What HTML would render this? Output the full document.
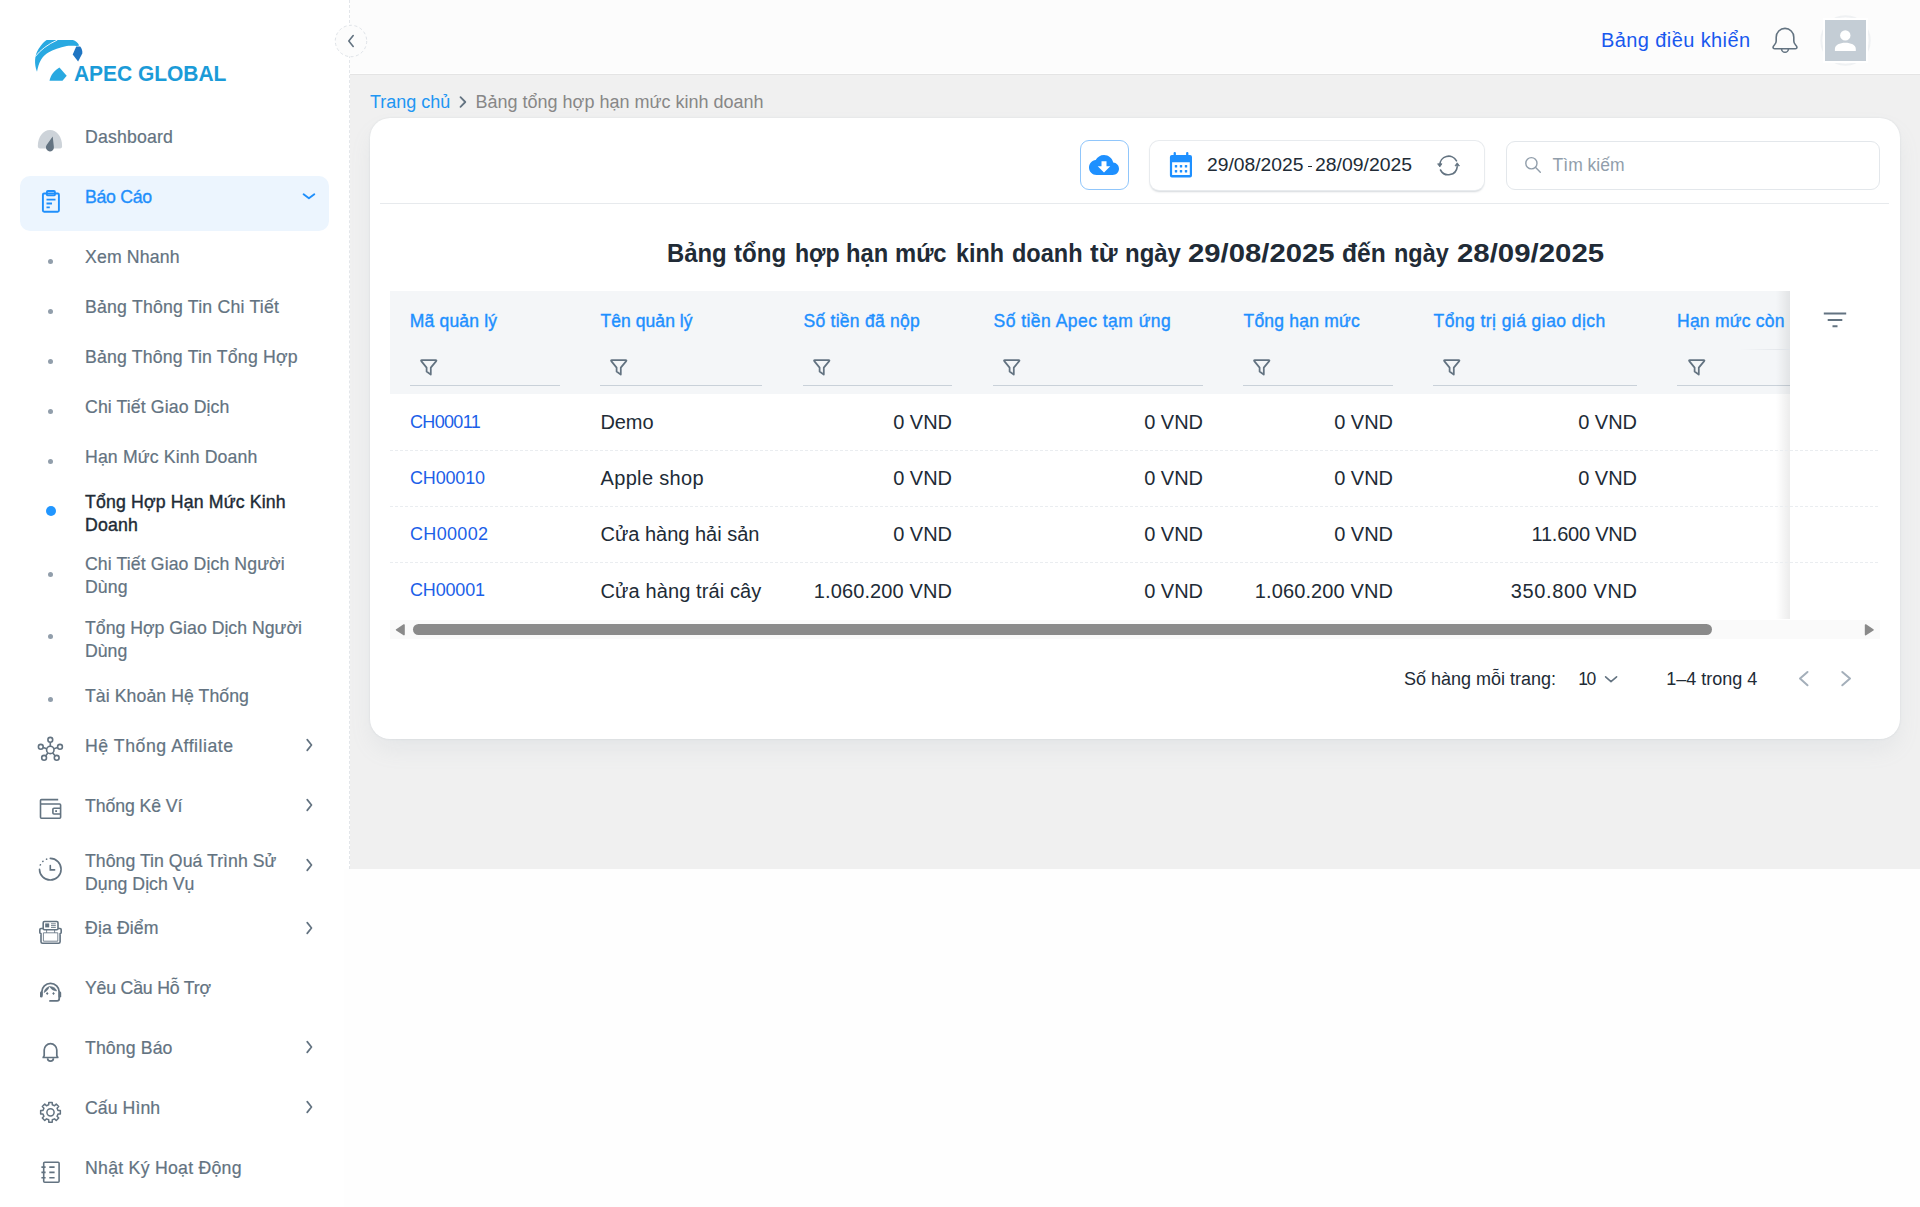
<!DOCTYPE html>
<html><head><meta charset="utf-8"><style>
*{box-sizing:border-box;margin:0;padding:0}
html,body{width:1920px;height:1207px;overflow:hidden;background:#fefefe;font-family:"Liberation Sans",sans-serif;}
.a{position:absolute}
#sidebar{position:absolute;left:0;top:0;width:350px;height:869px;background:#fff;border-right:1px dashed #e3e6ea}
#sidebar-low{position:absolute;left:0;top:869px;width:344px;height:338px;background:#fff}
.nav{position:absolute;left:85px;font-size:17.70px;line-height:23px;color:#637381;-webkit-text-stroke:0.2px #637381;white-space:nowrap}
.bul{position:absolute;left:48px;width:5px;height:5px;border-radius:50%;background:#919eab}
#header{position:absolute;left:350px;top:0;width:1570px;height:75px;background:#fcfcfc;border-bottom:1px solid #e4e4e4;box-shadow:inset 0 -1px 0 #fefefe}
#main{position:absolute;left:350px;top:75px;width:1570px;height:794px;background:#f0f0f0}
#card{position:absolute;left:370px;top:118px;width:1530px;height:621px;background:#fff;border-radius:20px;box-shadow:0 0 2px 0 rgba(145,158,171,0.25),0 12px 24px -4px rgba(145,158,171,0.14)}
.th{position:absolute;font-size:17.5px;line-height:22px;color:#1e90ff;-webkit-text-stroke:0.4px #1e90ff;white-space:nowrap}
.fl{position:absolute;top:385px;height:1px;background:#c9d1d9}
.td{position:absolute;font-size:20px;line-height:24px;color:#212b36;white-space:nowrap}
.lk{position:absolute;font-size:18px;line-height:22px;color:#1c5fe8;white-space:nowrap}
svg{position:absolute;overflow:visible}
</style></head><body>
<div id="sidebar"></div><div id="sidebar-low"></div>
<svg style="left:0;top:0" width="240" height="100" viewBox="0 0 240 100">
<path d="M37 71.7 C34 64 34.5 55 38.5 49 C42 43.5 45 40.5 47 39.9 L72.9 39.9 C75.5 40.5 78 42.5 79.2 45.6 L77 46.1 C73 45.6 69 45.6 66.7 46.1 C60 47.5 53 50 48.4 52.4 C44 55 40.5 59 38.5 65.4 C37.8 67.5 37.5 69.5 37 71.7 Z" fill="#29a9e1"/>
<path d="M35.3 56.6 Q43 46.5 57.4 40" fill="none" stroke="#fff" stroke-width="0.9"/>
<path d="M76.2 46.6 L80.2 46.4 C81.8 48.5 82.6 50.5 82.3 53.5 L78.1 61.5 L72.7 54.5 Z" fill="#1f75c2"/>
<path d="M49.5 80.8 C50.5 75 54.5 70.5 59.4 67.5 L66.7 75.8 L62.5 80.8 Z" fill="#29a9e1"/>
</svg>
<div class="a" style="left:74px;top:61.9px;font-size:21px;line-height:24px;font-weight:bold;color:#1b9bd8;white-space:nowrap;letter-spacing:-0.05px;transform:scaleY(1.06);transform-origin:0 19.3px">APEC GLOBAL</div>
<div class="a" style="left:20px;top:176px;width:309px;height:55px;border-radius:10px;background:#ecf5fe"></div>
<div class="nav" style="top:125.67px;letter-spacing:0.17px">Dashboard</div>
<div class="nav" style="top:185.57px;color:#1f8ffb;-webkit-text-stroke:0.35px #1f8ffb;letter-spacing:-0.3px">Báo Cáo</div>
<div class="nav" style="top:246.07px;letter-spacing:0.14px">Xem Nhanh</div>
<div class="bul" style="top:258.9px"></div>
<div class="nav" style="top:296.07px;letter-spacing:0.20px">Bảng Thông Tin Chi Tiết</div>
<div class="bul" style="top:308.9px"></div>
<div class="nav" style="top:346.37px;letter-spacing:0.18px">Bảng Thông Tin Tổng Hợp</div>
<div class="bul" style="top:359.2px"></div>
<div class="nav" style="top:396.37px;letter-spacing:0.11px">Chi Tiết Giao Dịch</div>
<div class="bul" style="top:409.2px"></div>
<div class="nav" style="top:446.07px;letter-spacing:0.13px">Hạn Mức Kinh Doanh</div>
<div class="bul" style="top:458.9px"></div>
<div class="nav" style="top:490.77px;color:#212b36;-webkit-text-stroke:0.4px #212b36;letter-spacing:0.16px">Tổng Hợp Hạn Mức Kinh<br>Doanh</div>
<div class="a" style="left:45.5px;top:506.4px;width:10px;height:10px;border-radius:50%;background:#2196ff"></div>
<div class="nav" style="top:553.27px;letter-spacing:0.10px">Chi Tiết Giao Dịch Người<br>Dùng</div>
<div class="bul" style="top:571.9px"></div>
<div class="nav" style="top:616.77px;letter-spacing:0.00px">Tổng Hợp Giao Dịch Người<br>Dùng</div>
<div class="bul" style="top:633.9px"></div>
<div class="nav" style="top:685.27px;letter-spacing:0.06px">Tài Khoản Hệ Thống</div>
<div class="bul" style="top:697.3px"></div>
<div class="nav" style="top:735.07px;letter-spacing:0.54px">Hệ Thống Affiliate</div>
<div class="nav" style="top:794.57px;letter-spacing:-0.09px">Thống Kê Ví</div>
<div class="nav" style="top:849.67px;letter-spacing:0.03px">Thông Tin Quá Trình Sử<br>Dụng Dịch Vụ</div>
<div class="nav" style="top:916.77px;letter-spacing:0.11px">Địa Điểm</div>
<div class="nav" style="top:976.52px;letter-spacing:-0.20px">Yêu Cầu Hỗ Trợ</div>
<div class="nav" style="top:1036.52px;letter-spacing:0.11px">Thông Báo</div>
<div class="nav" style="top:1096.52px;letter-spacing:0.06px">Cấu Hình</div>
<div class="nav" style="top:1156.52px;letter-spacing:0.26px">Nhật Ký Hoạt Động</div>
<svg style="left:300px;top:737.0px" width="16" height="16" viewBox="0 0 16 16"><path d="M7.2 2.6 L11.5 8 L7.2 13.4" fill="none" stroke="#637381" stroke-width="1.7" stroke-linecap="round" stroke-linejoin="round"/></svg>
<svg style="left:300px;top:797.4px" width="16" height="16" viewBox="0 0 16 16"><path d="M7.2 2.6 L11.5 8 L7.2 13.4" fill="none" stroke="#637381" stroke-width="1.7" stroke-linecap="round" stroke-linejoin="round"/></svg>
<svg style="left:300px;top:857.0px" width="16" height="16" viewBox="0 0 16 16"><path d="M7.2 2.6 L11.5 8 L7.2 13.4" fill="none" stroke="#637381" stroke-width="1.7" stroke-linecap="round" stroke-linejoin="round"/></svg>
<svg style="left:300px;top:919.6px" width="16" height="16" viewBox="0 0 16 16"><path d="M7.2 2.6 L11.5 8 L7.2 13.4" fill="none" stroke="#637381" stroke-width="1.7" stroke-linecap="round" stroke-linejoin="round"/></svg>
<svg style="left:300px;top:1039.4px" width="16" height="16" viewBox="0 0 16 16"><path d="M7.2 2.6 L11.5 8 L7.2 13.4" fill="none" stroke="#637381" stroke-width="1.7" stroke-linecap="round" stroke-linejoin="round"/></svg>
<svg style="left:300px;top:1099.4px" width="16" height="16" viewBox="0 0 16 16"><path d="M7.2 2.6 L11.5 8 L7.2 13.4" fill="none" stroke="#637381" stroke-width="1.7" stroke-linecap="round" stroke-linejoin="round"/></svg>
<svg style="left:300px;top:188px" width="18" height="16" viewBox="0 0 18 16"><path d="M3.6 6.2 L8.9 10.2 L14.3 6.2" fill="none" stroke="#1f8ffb" stroke-width="1.9" stroke-linecap="round" stroke-linejoin="round"/></svg>
<svg style="left:0;top:0" width="80" height="160"><path d="M37.8 146 C37.8 137 43 129.9 50 129.9 C57 129.9 62.1 137 62.1 146 C62.1 147.5 61.5 148.5 60 148.5 L40 148.5 C38.5 148.5 37.8 147.5 37.8 146 Z" fill="#cdd3d9"/>
<path d="M52.7 136.4 L53.88 146.96 A4 4 0 1 1 46.62 145.11 Z" fill="#637381"/></svg>
<svg style="left:0;top:0" width="80" height="240"><g fill="none" stroke="#1f8ffb" stroke-width="1.9" stroke-linejoin="round">
<rect x="42.9" y="193.5" width="16" height="18.3" rx="1.2"/>
<rect x="46.9" y="191" width="8" height="4.4" rx="1"/></g>
<g stroke="#1f8ffb" stroke-width="1.9"><path d="M46.5 199.6 H55.5 M46.5 203.5 H52 M46.5 207.4 H49.8"/></g></svg>
<svg style="left:0;top:0" width="80" height="800"><g fill="none" stroke="#637381" stroke-width="1.6">
<circle cx="50.3" cy="749.9" r="3.7"/>
<circle cx="50.3" cy="739.8" r="2.4"/><circle cx="40.8" cy="746.8" r="2.4"/><circle cx="60" cy="746.8" r="2.4"/>
<circle cx="44.1" cy="757.8" r="2.4"/><circle cx="56.7" cy="757.8" r="2.4"/>
<path d="M50.3 742.2 V746.2 M43.2 747.6 L46.8 748.7 M57.6 747.6 L53.9 748.7 M45.6 755.9 L48 752.8 M55.2 755.9 L52.6 752.8"/>
</g></svg>
<svg style="left:0;top:0" width="80" height="830"><g fill="none" stroke="#637381" stroke-width="1.6" stroke-linejoin="round">
<path d="M58.2 799.6 H41.5 Q40.5 799.6 40.5 800.6 V817.2 Q40.5 818.2 41.5 818.2 H59.6 Q60.6 818.2 60.6 817.2 V805 Q60.6 804 59.6 804 H40.5"/>
<path d="M60.6 808.2 H54 Q52.9 808.2 52.9 809.2 V813 Q52.9 814 54 814 H60.6"/>
</g><rect x="55.2" y="810.2" width="1.8" height="1.8" fill="#637381"/></svg>
<svg style="left:0;top:0" width="80" height="900"><g fill="none" stroke="#637381" stroke-width="1.6" stroke-linecap="round">
<path d="M50.3 858.4 A10.8 10.8 0 1 1 39.5 869.2"/>
<path d="M40.3 865 L40.4 864.8 M42.8 861.5 L43 861.3 M46.5 859.2 L46.7 859.1"/>
<path d="M50.3 865.6 V869.9 H54.6"/>
</g></svg>
<svg style="left:0;top:0" width="80" height="960"><g fill="none" stroke="#637381" stroke-width="1.6" stroke-linejoin="round">
<rect x="43.2" y="921.5" width="14.8" height="8.2" rx="1.2"/>
<path d="M43 928.5 H41 Q39.8 928.5 39.8 929.7 V932.6 Q39.8 933.6 41 933.6 V941.8 Q41 943.3 42.5 943.3 H58.6 Q60.1 943.3 60.1 941.8 V933.6 Q61.2 933.6 61.2 932.6 V929.7 Q61.2 928.5 60 928.5 H58"/>
</g><path d="M43.4 932.8 H57.8 V941.2 H43.4 Z M46.6 930 V932.8 M54.6 930 V932.8" fill="none" stroke="#637381" stroke-width="1" opacity="0.85"/><rect x="45.2" y="923.4" width="4" height="4" fill="#637381"/>
<path d="M51 923.8 H55.8 M51 925.6 H55.8 M51 927.4 H55.8" stroke="#637381" stroke-width="0.9"/></svg>
<svg style="left:0;top:0" width="80" height="1010"><g fill="none" stroke="#637381" stroke-width="1.8" stroke-linecap="round">
<path d="M41.8 995 V992 A8.7 8.7 0 0 1 59.2 992 V998.8 Q59.2 1000.9 57.1 1000.9 H50"/>
</g><g fill="#637381" stroke="#637381" stroke-width="0.6" stroke-linejoin="round"><path d="M44.1 992.6 Q44.6 988.2 49.3 986.6 Q48 990.8 44.1 992.6 Z M49.6 986.5 Q55.4 986.8 56.6 991 Q51.6 990.6 49.6 986.5 Z"/>
</g><rect x="40" y="991.5" width="2.6" height="6" rx="1.3" fill="#637381"/><rect x="58.6" y="991.5" width="2.6" height="6" rx="1.3" fill="#637381"/>
<path d="M47.2 992.1 L48.5 993.5 L47.2 994.9 L45.9 993.5 Z M53.5 992.1 L54.8 993.5 L53.5 994.9 L52.2 993.5 Z" fill="#637381"/></svg>
<svg style="left:0;top:0" width="80" height="1070"><g fill="none" stroke="#637381" stroke-width="1.7" stroke-linejoin="round">
<path d="M43.2 1057.5 L44.2 1055.6 V1050 A6.3 6.3 0 0 1 56.8 1050 V1055.6 L57.8 1057.5 Z"/>
<path d="M47.6 1058.3 A2.9 2.9 0 0 0 53.4 1058.3"/>
</g></svg>
<svg style="left:0;top:0" width="80" height="1130"><g fill="none" stroke="#637381" stroke-width="1.5" stroke-linejoin="round">
<path d="M48.78 1102.45 L52.22 1102.45 L52.30 1104.81 L54.52 1105.73 L56.25 1104.12 L58.68 1106.55 L57.07 1108.28 L57.99 1110.50 L60.35 1110.58 L60.35 1114.02 L57.99 1114.10 L57.07 1116.32 L58.68 1118.05 L56.25 1120.48 L54.52 1118.87 L52.30 1119.79 L52.22 1122.15 L48.78 1122.15 L48.70 1119.79 L46.48 1118.87 L44.75 1120.48 L42.32 1118.05 L43.93 1116.32 L43.01 1114.10 L40.65 1114.02 L40.65 1110.58 L43.01 1110.50 L43.93 1108.28 L42.32 1106.55 L44.75 1104.12 L46.48 1105.73 L48.70 1104.81 Z"/><circle cx="50.5" cy="1112.3" r="3.6"/></g></svg>
<svg style="left:0;top:0" width="80" height="1190"><g fill="none" stroke="#637381" stroke-width="1.6" stroke-linejoin="round">
<rect x="43.7" y="1162.2" width="15.4" height="20" rx="1"/></g>
<path d="M41.4 1167.1 H45.6 M41.4 1172.4 H45.6 M41.4 1177.7 H45.6 M49.3 1167.1 H54.6 M49.3 1172.4 H54.6 M49.3 1177.7 H54.6" stroke="#637381" stroke-width="1.6"/></svg>
<div id="header"></div>
<svg style="left:334px;top:24px" width="34" height="34" viewBox="0 0 34 34"><circle cx="17" cy="17" r="15.7" fill="#fcfcfc" stroke="#dfe3e8" stroke-width="1" stroke-dasharray="3 2.5"/>
<path d="M19.2 11.5 L14.8 17 L19.2 22.5" fill="none" stroke="#637381" stroke-width="1.6" stroke-linecap="round" stroke-linejoin="round"/></svg>
<div class="a" style="left:1601px;top:28.2px;font-size:20px;line-height:24px;color:#1858ee;white-space:nowrap;letter-spacing:0.4px">Bảng điều khiển</div>
<svg style="left:0;top:0" width="1920" height="80"><g fill="none" stroke="#637381" stroke-width="1.6" stroke-linejoin="round" stroke-linecap="round">
<path d="M1776.2 37.2 A8.8 8.8 0 0 1 1793.8 37.2 V41 Q1793.8 43.3 1795.6 45 Q1797.6 47 1796.6 48.2 Q1796.2 48.7 1795.2 48.7 H1774.8 Q1773.8 48.7 1773.4 48.2 Q1772.4 47 1774.4 45 Q1776.2 43.3 1776.2 41 Z"/>
<path d="M1781.6 48.9 A3.4 3.4 0 0 0 1788.4 48.9"/></g></svg>
<svg style="left:1815px;top:10px" width="61" height="61" viewBox="0 0 61 61"><circle cx="30.5" cy="30.5" r="24.2" fill="none" stroke="#eff1f3" stroke-width="2"/></svg>
<div class="a" style="left:1822.7px;top:18px;width:45.4px;height:45.4px;background:#fff"></div>
<svg style="left:1825px;top:20px" width="41" height="41" viewBox="0 0 41 41"><rect width="41" height="41" fill="#c4cdd5"/>
<circle cx="20.3" cy="15.4" r="5.2" fill="#fff"/><path d="M9.9 31 V28.9 C9.9 25 14.8 22.8 20.3 22.8 C25.8 22.8 30.8 25 30.8 28.9 V31 Z" fill="#fff"/></svg>
<div id="main"></div>
<div class="a" style="left:370px;top:91.2px;font-size:18px;line-height:22px;color:#2196f3;white-space:nowrap">Trang chủ</div>
<svg style="left:456px;top:94px" width="14" height="16" viewBox="0 0 14 16"><path d="M4.5 3.2 L9.3 8 L4.5 12.8" fill="none" stroke="#637381" stroke-width="1.8" stroke-linecap="round" stroke-linejoin="round"/></svg>
<div class="a" style="left:475.5px;top:91.2px;font-size:18px;line-height:22px;color:#878787;white-space:nowrap;letter-spacing:0px">Bảng tổng hợp hạn mức kinh doanh</div>
<div id="card"></div>
<div class="a" style="left:1079.5px;top:140px;width:49.5px;height:49.5px;border:1px solid #90c6fb;border-radius:9px;background:#fff"></div>
<svg style="left:1088.9px;top:149.9px" width="30" height="30" viewBox="0 0 24 24"><path transform="scale(1)" d="M19.35 10.04C18.67 6.59 15.64 4 12 4 9.11 4 6.6 5.64 5.35 8.04 2.34 8.36 0 10.91 0 14c0 3.31 2.69 6 6 6h13c2.76 0 5-2.24 5-5 0-2.64-2.05-4.78-4.65-4.96zM17 13l-5 5-5-5h3V9h4v4h3z" fill="#1e90ff"/></svg>
<div class="a" style="left:1150px;top:140.5px;width:334px;height:49px;border-radius:9px;background:#fff;box-shadow:0 0 0 1px #e8ebee,0 1.5px 2px 0 rgba(99,115,129,0.28)"></div>
<svg style="left:1160px;top:145px" width="40" height="40" viewBox="0 0 40 40">
<path d="M9.9 11.9 Q9.9 9.9 11.9 9.9 H30 Q32 9.9 32 11.9 V30.5 Q32 32.5 30 32.5 H11.9 Q9.9 32.5 9.9 30.5 Z M12.1 17.2 V30 H29.8 V17.2 Z" fill="#1e90ff" fill-rule="evenodd"/>
<rect x="13.6" y="7" width="2.3" height="4" rx="1" fill="#1e90ff"/><rect x="26.1" y="7" width="2.3" height="4" rx="1" fill="#1e90ff"/>
<g fill="#1e90ff"><rect x="14.8" y="20" width="2.4" height="2.4" rx="0.5"/><rect x="19.8" y="20" width="2.4" height="2.4" rx="0.5"/><rect x="24.8" y="20" width="2.4" height="2.4" rx="0.5"/>
<rect x="14.8" y="25" width="2.4" height="2.4" rx="0.5"/><rect x="19.8" y="25" width="2.4" height="2.4" rx="0.5"/><rect x="24.8" y="25" width="2.4" height="2.4" rx="0.5"/></g></svg>
<div class="a" style="left:1307.9px;top:165.8px;width:4.2px;height:1.3px;background:#212b36"></div>
<div class="a" style="left:1206.60px;top:154.3px;font-size:18px;line-height:22px;color:#212b36;white-space:nowrap;transform:scaleX(1.0711);transform-origin:0.00px 0">29/08/2025</div>
<div class="a" style="left:1315.00px;top:154.3px;font-size:18px;line-height:22px;color:#212b36;white-space:nowrap;transform:scaleX(1.0767);transform-origin:0.00px 0">28/09/2025</div>
<svg style="left:1428px;top:145px" width="40" height="40" viewBox="0 0 40 40"><g fill="none" stroke="#637381" stroke-width="1.6" stroke-linecap="round">
<path d="M11.8 20.2 A8.9 8.9 0 0 1 28.5 15.8"/><path d="M12.5 25 A8.9 8.9 0 0 0 29.2 21.8"/></g>
<path d="M9.6 18.8 H14 L11.8 21.9 Z M27 20.8 H31.5 L29.2 17.8 Z" fill="#637381" stroke="#637381" stroke-width="0.8" stroke-linejoin="round"/></svg>
<div class="a" style="left:1505.5px;top:140.5px;width:374.5px;height:49px;border:1px solid #e3e7eb;border-radius:9px;background:#fff"></div>
<svg style="left:1515px;top:145px" width="40" height="40" viewBox="0 0 40 40"><g fill="none" stroke="#919eab" stroke-width="1.4" stroke-linecap="round"><circle cx="16.4" cy="18.25" r="5.6"/><path d="M20.4 22.3 L25.3 27.2"/></g></svg>
<div class="a" style="left:1552.6px;top:154.1px;font-size:17.5px;line-height:22px;color:#919eab;white-space:nowrap">Tìm kiếm</div>
<div class="a" style="left:380px;top:202.5px;width:1509px;height:1px;background:#e7eaed"></div>
<div class="a" style="left:666.90px;top:238.5px;font-size:25px;line-height:28px;font-weight:bold;color:#212b36;white-space:nowrap;transform:scaleX(0.9552);transform-origin:0.00px 0">Bảng</div>
<div class="a" style="left:734.40px;top:238.5px;font-size:25px;line-height:28px;font-weight:bold;color:#212b36;white-space:nowrap;transform:scaleX(0.9641);transform-origin:0.00px 0">tổng</div>
<div class="a" style="left:794.50px;top:238.5px;font-size:25px;line-height:28px;font-weight:bold;color:#212b36;white-space:nowrap;transform:scaleX(0.9244);transform-origin:0.00px 0">hợp</div>
<div class="a" style="left:846.10px;top:238.5px;font-size:25px;line-height:28px;font-weight:bold;color:#212b36;white-space:nowrap;transform:scaleX(0.9483);transform-origin:0.00px 0">hạn</div>
<div class="a" style="left:895.30px;top:238.5px;font-size:25px;line-height:28px;font-weight:bold;color:#212b36;white-space:nowrap;transform:scaleX(0.9512);transform-origin:0.00px 0">mức</div>
<div class="a" style="left:955.50px;top:238.5px;font-size:25px;line-height:28px;font-weight:bold;color:#212b36;white-space:nowrap;transform:scaleX(0.9340);transform-origin:0.00px 0">kinh</div>
<div class="a" style="left:1011.60px;top:238.5px;font-size:25px;line-height:28px;font-weight:bold;color:#212b36;white-space:nowrap;transform:scaleX(0.9400);transform-origin:0.00px 0">doanh</div>
<div class="a" style="left:1090.10px;top:238.5px;font-size:25px;line-height:28px;font-weight:bold;color:#212b36;white-space:nowrap;transform:scaleX(1.0377);transform-origin:0.00px 0">từ</div>
<div class="a" style="left:1124.50px;top:238.5px;font-size:25px;line-height:28px;font-weight:bold;color:#212b36;white-space:nowrap;transform:scaleX(0.9590);transform-origin:0.00px 0">ngày</div>
<div class="a" style="left:1187.80px;top:238.5px;font-size:25px;line-height:28px;font-weight:bold;color:#212b36;white-space:nowrap;transform:scaleX(1.1712);transform-origin:0.00px 0">29/08/2025</div>
<div class="a" style="left:1342.00px;top:238.5px;font-size:25px;line-height:28px;font-weight:bold;color:#212b36;white-space:nowrap;transform:scaleX(0.9820);transform-origin:0.00px 0">đến</div>
<div class="a" style="left:1393.60px;top:238.5px;font-size:25px;line-height:28px;font-weight:bold;color:#212b36;white-space:nowrap;transform:scaleX(0.9385);transform-origin:0.00px 0">ngày</div>
<div class="a" style="left:1456.90px;top:238.5px;font-size:25px;line-height:28px;font-weight:bold;color:#212b36;white-space:nowrap;transform:scaleX(1.1760);transform-origin:0.00px 0">28/09/2025</div>
<div class="a" style="left:390px;top:291px;width:1400px;height:103px;background:#f4f6f8"></div>
<div class="th" style="left:409.7px;top:309.5px;letter-spacing:0.20px">Mã quản lý</div>
<div class="fl" style="left:410px;width:150px"></div>
<svg style="left:411.5px;top:352px" width="32" height="32" viewBox="0 0 32 32"><path d="M9.8 8 H23.7 Q24.9 8 24.2 9.1 L18.8 15.6 V22.6 L14.6 19.5 V15.6 L9.3 9.1 Q8.6 8 9.8 8 Z" fill="none" stroke="#637381" stroke-width="1.75" stroke-linejoin="round"/></svg>
<div class="th" style="left:600.5px;top:309.5px;letter-spacing:0.06px">Tên quản lý</div>
<div class="fl" style="left:600px;width:162px"></div>
<svg style="left:601.5px;top:352px" width="32" height="32" viewBox="0 0 32 32"><path d="M9.8 8 H23.7 Q24.9 8 24.2 9.1 L18.8 15.6 V22.6 L14.6 19.5 V15.6 L9.3 9.1 Q8.6 8 9.8 8 Z" fill="none" stroke="#637381" stroke-width="1.75" stroke-linejoin="round"/></svg>
<div class="th" style="left:803.5px;top:309.5px;letter-spacing:0.26px">Số tiền đã nộp</div>
<div class="fl" style="left:803px;width:149px"></div>
<svg style="left:804.5px;top:352px" width="32" height="32" viewBox="0 0 32 32"><path d="M9.8 8 H23.7 Q24.9 8 24.2 9.1 L18.8 15.6 V22.6 L14.6 19.5 V15.6 L9.3 9.1 Q8.6 8 9.8 8 Z" fill="none" stroke="#637381" stroke-width="1.75" stroke-linejoin="round"/></svg>
<div class="th" style="left:993.5px;top:309.5px;letter-spacing:0.47px">Số tiền Apec tạm ứng</div>
<div class="fl" style="left:993px;width:210px"></div>
<svg style="left:994.5px;top:352px" width="32" height="32" viewBox="0 0 32 32"><path d="M9.8 8 H23.7 Q24.9 8 24.2 9.1 L18.8 15.6 V22.6 L14.6 19.5 V15.6 L9.3 9.1 Q8.6 8 9.8 8 Z" fill="none" stroke="#637381" stroke-width="1.75" stroke-linejoin="round"/></svg>
<div class="th" style="left:1243.5px;top:309.5px;letter-spacing:0.22px">Tổng hạn mức</div>
<div class="fl" style="left:1243px;width:150px"></div>
<svg style="left:1244.5px;top:352px" width="32" height="32" viewBox="0 0 32 32"><path d="M9.8 8 H23.7 Q24.9 8 24.2 9.1 L18.8 15.6 V22.6 L14.6 19.5 V15.6 L9.3 9.1 Q8.6 8 9.8 8 Z" fill="none" stroke="#637381" stroke-width="1.75" stroke-linejoin="round"/></svg>
<div class="th" style="left:1433.5px;top:309.5px;letter-spacing:0.44px">Tổng trị giá giao dịch</div>
<div class="fl" style="left:1433px;width:204px"></div>
<svg style="left:1434.5px;top:352px" width="32" height="32" viewBox="0 0 32 32"><path d="M9.8 8 H23.7 Q24.9 8 24.2 9.1 L18.8 15.6 V22.6 L14.6 19.5 V15.6 L9.3 9.1 Q8.6 8 9.8 8 Z" fill="none" stroke="#637381" stroke-width="1.75" stroke-linejoin="round"/></svg>
<div class="th" style="left:1677.0px;top:309.5px;letter-spacing:0.25px">Hạn mức còn</div>
<div class="fl" style="left:1677px;width:113px"></div>
<svg style="left:1679.5px;top:352px" width="32" height="32" viewBox="0 0 32 32"><path d="M9.8 8 H23.7 Q24.9 8 24.2 9.1 L18.8 15.6 V22.6 L14.6 19.5 V15.6 L9.3 9.1 Q8.6 8 9.8 8 Z" fill="none" stroke="#637381" stroke-width="1.75" stroke-linejoin="round"/></svg>
<div class="lk" style="left:410px;top:410.8px;letter-spacing:-0.67px">CH00011</div>
<div class="td" style="left:600.5px;top:409.9px;letter-spacing:-0.10px">Demo</div>
<div class="td" style="left:651.95px;width:300px;text-align:right;top:409.9px;letter-spacing:-0.05px">0 VND</div>
<div class="td" style="left:902.95px;width:300px;text-align:right;top:409.9px;letter-spacing:-0.05px">0 VND</div>
<div class="td" style="left:1092.95px;width:300px;text-align:right;top:409.9px;letter-spacing:-0.05px">0 VND</div>
<div class="td" style="left:1336.95px;width:300px;text-align:right;top:409.9px;letter-spacing:-0.05px">0 VND</div>
<div class="lk" style="left:410px;top:467.0px;letter-spacing:-0.18px">CH00010</div>
<div class="td" style="left:600.5px;top:466.1px;letter-spacing:0.34px">Apple shop</div>
<div class="td" style="left:651.95px;width:300px;text-align:right;top:466.1px;letter-spacing:-0.05px">0 VND</div>
<div class="td" style="left:902.95px;width:300px;text-align:right;top:466.1px;letter-spacing:-0.05px">0 VND</div>
<div class="td" style="left:1092.95px;width:300px;text-align:right;top:466.1px;letter-spacing:-0.05px">0 VND</div>
<div class="td" style="left:1336.95px;width:300px;text-align:right;top:466.1px;letter-spacing:-0.05px">0 VND</div>
<div class="lk" style="left:410px;top:523.2px;letter-spacing:0.32px">CH00002</div>
<div class="td" style="left:600.5px;top:522.3px;letter-spacing:-0.01px">Cửa hàng hải sản</div>
<div class="td" style="left:651.95px;width:300px;text-align:right;top:522.3px;letter-spacing:-0.05px">0 VND</div>
<div class="td" style="left:902.95px;width:300px;text-align:right;top:522.3px;letter-spacing:-0.05px">0 VND</div>
<div class="td" style="left:1092.95px;width:300px;text-align:right;top:522.3px;letter-spacing:-0.05px">0 VND</div>
<div class="td" style="left:1336.78px;width:300px;text-align:right;top:522.3px;letter-spacing:-0.22px">11.600 VND</div>
<div class="lk" style="left:410px;top:579.4px;letter-spacing:-0.18px">CH00001</div>
<div class="td" style="left:600.5px;top:578.5px;letter-spacing:0.11px">Cửa hàng trái cây</div>
<div class="td" style="left:652.12px;width:300px;text-align:right;top:578.5px;letter-spacing:0.12px">1.060.200 VND</div>
<div class="td" style="left:902.95px;width:300px;text-align:right;top:578.5px;letter-spacing:-0.05px">0 VND</div>
<div class="td" style="left:1093.12px;width:300px;text-align:right;top:578.5px;letter-spacing:0.12px">1.060.200 VND</div>
<div class="td" style="left:1337.61px;width:300px;text-align:right;top:578.5px;letter-spacing:0.61px">350.800 VND</div>
<div class="a" style="left:1776px;top:291px;width:14px;height:328px;background:linear-gradient(to right,rgba(0,0,0,0),rgba(0,0,0,0.075))"></div>
<div class="a" style="left:1790px;top:291px;width:90px;height:328px;background:#fff"></div>
<svg style="left:1820px;top:304px" width="30" height="30" viewBox="0 0 30 30"><path d="M3.8 9.5 H26.2 M7.7 16 H22.3 M12.5 22.2 H17.5" stroke="#637381" stroke-width="2"/></svg>
<div class="a" style="left:390px;top:450.0px;width:1490px;height:1px;background-image:linear-gradient(to right,#eaedf0 60%,transparent 60%);background-size:5px 1px"></div>
<div class="a" style="left:390px;top:506.0px;width:1490px;height:1px;background-image:linear-gradient(to right,#eaedf0 60%,transparent 60%);background-size:5px 1px"></div>
<div class="a" style="left:390px;top:562.0px;width:1490px;height:1px;background-image:linear-gradient(to right,#eaedf0 60%,transparent 60%);background-size:5px 1px"></div>
<div class="a" style="left:1740px;top:349px;width:50px;height:1px;background:linear-gradient(to right,rgba(223,227,232,0),#dfe3e8)"></div>
<div class="a" style="left:390px;top:620px;width:1490px;height:19px;background:#fafafa"></div>
<svg style="left:390px;top:620px" width="1490" height="19"><path d="M6.6 9.8 L14 5 V14.6 Z" fill="#8a8a8a" stroke="#8a8a8a" stroke-width="1.6" stroke-linejoin="round"/><path d="M1475.6 5 L1483 9.8 L1475.6 14.6 Z" fill="#8a8a8a" stroke="#8a8a8a" stroke-width="1.6" stroke-linejoin="round"/></svg>
<div class="a" style="left:413px;top:624px;width:1299px;height:11px;border-radius:5.5px;background:#8a8a8a"></div>
<div class="a" style="left:1403.9px;top:668.1px;font-size:18px;line-height:22px;color:#212b36;white-space:nowrap;letter-spacing:0px">Số hàng mỗi trang:</div>
<div class="a" style="left:1578.3px;top:667.9px;font-size:17.5px;line-height:22px;color:#212b36;white-space:nowrap;letter-spacing:-1.5px">10</div>
<svg style="left:1600px;top:670px" width="22" height="18" viewBox="0 0 22 18"><path d="M5.6 6.8 L11 11.6 L16.6 6.8" fill="none" stroke="#637381" stroke-width="1.6" stroke-linecap="round" stroke-linejoin="round"/></svg>
<div class="a" style="left:1666.3px;top:667.8px;font-size:18px;line-height:22px;color:#212b36;white-space:nowrap;letter-spacing:0px">1–4 trong 4</div>
<svg style="left:1790px;top:664px" width="70" height="30" viewBox="0 0 70 30"><g fill="none" stroke="#a4afba" stroke-width="2" stroke-linecap="round" stroke-linejoin="round"><path d="M17.5 8 L10 14.6 L17.5 21.3"/><path d="M52.3 8 L60 14.6 L52.3 21.3"/></g></svg>
</body></html>
